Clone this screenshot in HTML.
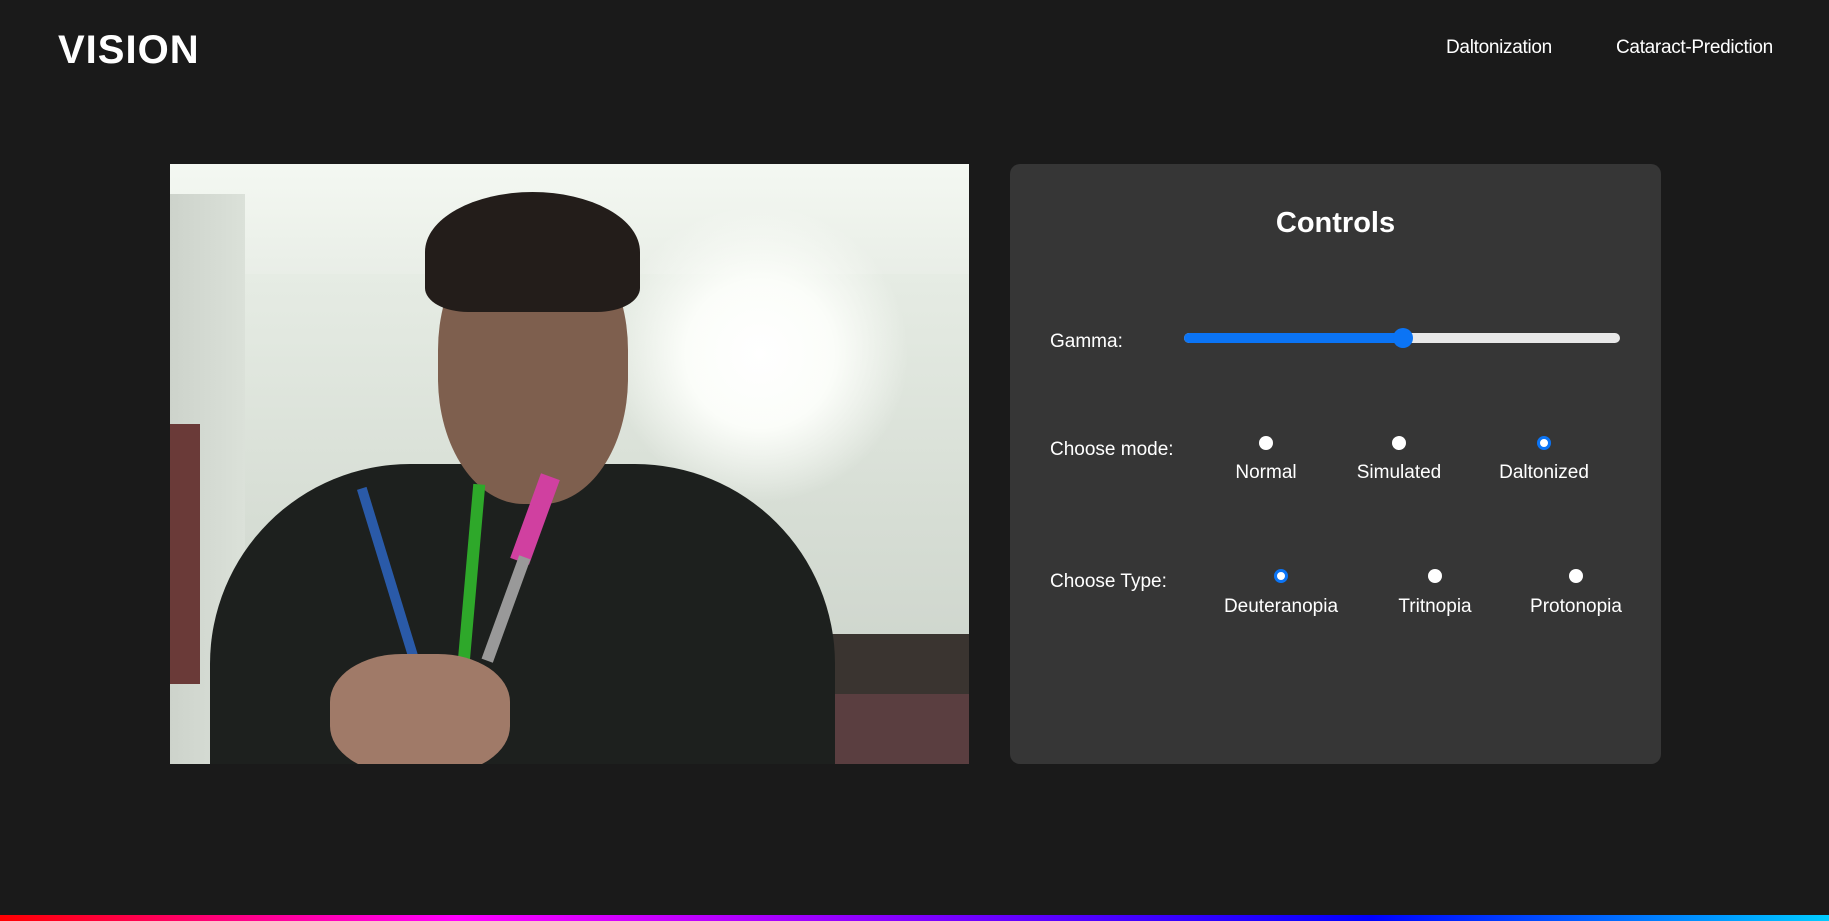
<!DOCTYPE html>
<html><head><meta charset="utf-8"><style>
*{margin:0;padding:0;box-sizing:border-box}
body{width:1829px;height:921px;background:#1a1a1a;font-family:"Liberation Sans",sans-serif;color:#fff;position:relative;overflow:hidden}
.logo{position:absolute;left:58px;top:28px;font-size:40px;font-weight:bold;letter-spacing:1px}
.nav{position:absolute;top:37px;font-size:19px;letter-spacing:-0.3px}
.img{position:absolute;left:170px;top:164px;width:799px;height:600px;overflow:hidden;background:linear-gradient(180deg,#f0f5ef 0%,#e6ece4 18%,#d6ddd4 60%,#c9d0c8 100%)}
.img div{position:absolute}
.panel{position:absolute;left:1010px;top:164px;width:651px;height:600px;background:#363636;border-radius:10px}
.t{position:absolute;font-size:19px;white-space:nowrap}
.r{position:absolute;width:14px;height:14px;border-radius:50%;background:#fff}
.r.on{background:#fff;border:3px solid #0b74f5}
.bar{position:absolute;left:0;bottom:0;width:1829px;height:6px;background:linear-gradient(90deg,#f00 0%,#f0f 25%,#00f 75%,#0cf 100%)}
</style></head><body>
<div class="logo">VISION</div>
<div class="nav" style="left:1446px">Daltonization</div>
<div class="nav" style="left:1616px">Cataract-Prediction</div>

<div class="img">
 <div style="left:0;top:0;width:799px;height:110px;background:linear-gradient(180deg,#f4f8f2,#e9eee7)"></div>
 <div style="left:0;top:30px;width:75px;height:570px;background:linear-gradient(90deg,#cdd3cb,#dbe1d9)"></div>
 <div style="left:440px;top:40px;width:300px;height:300px;border-radius:50%;background:radial-gradient(circle,#ffffff 0%,#fbfdf9 35%,rgba(240,245,238,0) 70%)"></div>
 <div style="left:0;top:260px;width:30px;height:260px;background:#6a3a38"></div>
 <div style="left:640px;top:470px;width:159px;height:130px;background:#3a3430"></div>
 <div style="left:640px;top:530px;width:159px;height:70px;background:#5a3e40"></div>
 <div style="left:40px;top:300px;width:625px;height:320px;border-radius:200px 200px 0 0;background:#1d201e"></div>
 <div style="left:268px;top:60px;width:190px;height:280px;border-radius:45%;background:#7e5f4e"></div>
 <div style="left:255px;top:28px;width:215px;height:120px;border-radius:50% 50% 20% 20%;background:#231d1a"></div>
 <div style="left:216px;top:320px;width:10px;height:200px;background:#2a5aa8;transform:rotate(-17deg)"></div>
 <div style="left:295px;top:320px;width:12px;height:190px;background:#2ea82a;transform:rotate(5deg)"></div>
 <div style="left:355px;top:310px;width:20px;height:90px;background:#d040a0;transform:rotate(20deg)"></div>
 <div style="left:330px;top:390px;width:12px;height:110px;background:#999;transform:rotate(20deg)"></div>
 <div style="left:160px;top:490px;width:180px;height:120px;border-radius:40%;background:#a07a68"></div>
</div>

<div class="panel">
 <div class="t" style="left:0;width:651px;text-align:center;top:43px;font-size:29px;font-weight:bold">Controls</div>
 <div class="t" style="left:40px;top:167px">Gamma:</div>
 <div style="position:absolute;left:174px;top:169px;width:436px;height:10px;border-radius:5px;background:#e8e8e8"></div>
 <div style="position:absolute;left:174px;top:169px;width:220px;height:10px;border-radius:5px;background:#0b74f5"></div>
 <div style="position:absolute;left:383px;top:164px;width:20px;height:20px;border-radius:50%;background:#0b74f5"></div>

 <div class="t" style="left:40px;top:275px">Choose mode:</div>
 <div class="r" style="left:249px;top:272px"></div>
 <div class="r" style="left:382px;top:272px"></div>
 <div class="r on" style="left:527px;top:272px"></div>
 <div class="t" style="left:256px;top:298px;transform:translateX(-50%)">Normal</div>
 <div class="t" style="left:389px;top:298px;transform:translateX(-50%)">Simulated</div>
 <div class="t" style="left:534px;top:298px;transform:translateX(-50%)">Daltonized</div>

 <div class="t" style="left:40px;top:407px">Choose Type:</div>
 <div class="r on" style="left:264px;top:405px"></div>
 <div class="r" style="left:418px;top:405px"></div>
 <div class="r" style="left:559px;top:405px"></div>
 <div class="t" style="left:271px;top:432px;transform:translateX(-50%)">Deuteranopia</div>
 <div class="t" style="left:425px;top:432px;transform:translateX(-50%)">Tritnopia</div>
 <div class="t" style="left:566px;top:432px;transform:translateX(-50%)">Protonopia</div>
</div>
<div class="bar"></div>
</body></html>
